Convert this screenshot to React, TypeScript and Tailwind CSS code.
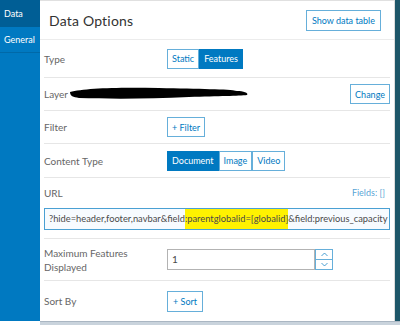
import { FunctionComponent, ReactNode } from "react";

const Row: FunctionComponent<{ label: ReactNode; children?: ReactNode; className?: string }> = ({ label, children, className }) => (
    <div className={`flex items-center border-b border-[#e6e6e6] ${className ?? ""}`}>
        <div className="w-[123px] shrink-0 text-[10px] text-[#666] leading-[14px]">{label}</div>
        <div className="flex-1 min-w-0 flex items-center">{children}</div>
    </div>
);

const OutlineBtn: FunctionComponent<{ children: ReactNode; className?: string }> = ({ children, className }) => (
    <button className={`border border-[#0079c1]/60 bg-white text-[#0079c1] text-[9px] h-[20px] px-[4px] leading-none whitespace-nowrap ${className ?? ""}`}>
        {children}
    </button>
);

const FilledBtn: FunctionComponent<{ children: ReactNode }> = ({ children }) => (
    <button className="border border-[#0079c1] bg-[#0079c1] text-white text-[9px] h-[20px] px-[4px] leading-none">
        {children}
    </button>
);

const App = () => {
    return (
        <div className="w-[400px] h-[325px] flex bg-white overflow-hidden" style={{ fontFamily: "Lato, 'Open Sans', sans-serif" }}>
            {/* side tabs */}
            <div className="w-[40px] shrink-0 h-[321px] bg-[#0079c1] flex flex-col text-white text-[9px]">
                <div className="h-[27px] bg-[#005e95] flex items-center pl-[4px]">Data</div>
                <div className="h-[26px] flex items-center pl-[4px] border-b border-[#0069a8]">General</div>
            </div>

            <div className="w-[360px] shrink-0 flex flex-col h-[325px]">
                <div className="flex flex-1 min-h-0">
                    {/* panel */}
                    <div className="w-[354px] shrink-0 min-w-0 flex flex-col border-t border-[#e0e0e0]">
                        <div className="h-[40px] flex items-center justify-between pl-[9px] pr-[13px] border-b border-[#ececec]">
                            <span className="text-[14px] text-[#323232] tracking-[0.2px]">Data Options</span>
                            <OutlineBtn className="h-[21px] px-[5px]">Show data table</OutlineBtn>
                        </div>

                        <div className="flex flex-col pl-[4px] pr-[4px]">
                            <Row label="Type" className="h-[38px]">
                                <OutlineBtn>Static</OutlineBtn>
                                <FilledBtn>Features</FilledBtn>
                            </Row>
                            <Row
                                label={
                                    <div className="relative flex items-center">
                                        <span>Layer</span>
                                        <svg width="182" height="16" viewBox="0 0 182 16" className="absolute left-[25px] top-[-2px]">
                                            <path d="M1 7 C15 3, 50 2, 90 3 C130 4, 160 4, 168 6 C174 6, 180 8, 178 10 C170 11, 150 11, 120 12 C80 14, 40 14, 10 13 C4 12, 1 11, 1 7 Z" fill="#000" />
                                        </svg>
                                    </div>
                                }
                                className="h-[33px]"
                            >
                                <div className="flex-1" />
                                <OutlineBtn className="h-[18px] px-[4px]">Change</OutlineBtn>
                            </Row>
                            <Row label="Filter" className="h-[33px]">
                                <OutlineBtn>+ Filter</OutlineBtn>
                            </Row>
                            <Row label="Content Type" className="h-[34px]">
                                <FilledBtn>Document</FilledBtn>
                                <OutlineBtn>Image</OutlineBtn>
                                <OutlineBtn>Video</OutlineBtn>
                            </Row>
                            <div className="flex flex-col border-b border-[#e6e6e6] pb-[8px]">
                                <div className="h-[30px] flex items-center justify-between">
                                    <span className="text-[10px] text-[#666]">URL</span>
                                    <span className="text-[9px] text-[#0079c1]/70 pr-[5px]">Fields: []</span>
                                </div>
                                <div className="h-[22px] border border-[#0079c1]/70 flex items-center pl-[4px] text-[9.3px] text-[#4a4a4a] whitespace-nowrap overflow-hidden bg-[#f7fbff]">
                                    <span>?hide=header,footer,navbar&amp;field</span>
                                    <span className="bg-[#fff200] py-[3px]">:parentglobalid=[globalid]</span>
                                    <span>&amp;field:previous_capacity</span>
                                </div>
                            </div>
                            <Row label={<>Maximum Features<br />Displayed</>} className="h-[42px]">
                                <div className="w-[148px] h-[21px] border border-[#b3b3b3] flex items-center pl-[4px] text-[10px] text-[#4a4a4a]">1</div>
                                <div className="w-[18px] h-[21px] flex flex-col border border-[#0079c1]/60">
                                    <div className="flex-1 flex items-center justify-center border-b border-[#0079c1]/60">
                                        <svg width="7" height="5" viewBox="0 0 7 5"><path d="M0.5 4 L3.5 1 L6.5 4" fill="none" stroke="#0079c1" strokeOpacity="0.7" /></svg>
                                    </div>
                                    <div className="flex-1 flex items-center justify-center">
                                        <svg width="7" height="5" viewBox="0 0 7 5"><path d="M0.5 1 L3.5 4 L6.5 1" fill="none" stroke="#0079c1" strokeOpacity="0.7" /></svg>
                                    </div>
                                </div>
                            </Row>
                            <div className="flex items-center h-[40px]">
                                <div className="w-[123px] text-[10px] text-[#666]">Sort By</div>
                                <OutlineBtn className="h-[21px] px-[5px]">+ Sort</OutlineBtn>
                            </div>
                        </div>
                    </div>
                    {/* right edge */}
                    <div className="w-[1px] bg-[#dcdcdc]" />
                    <div className="w-[5px] bg-[#1d5669]" />
                </div>
                <div className="h-[4px] bg-[#c9d3dc] border-t border-[#aab6c2]" />
            </div>
        </div>
    );
};

export default App;
